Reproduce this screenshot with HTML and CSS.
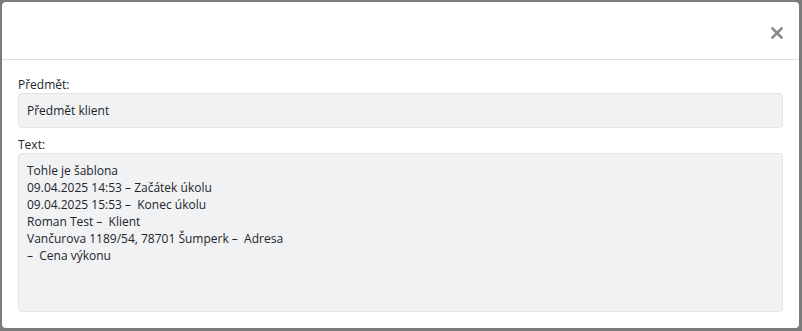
FILE: index.html
```html
<!DOCTYPE html>
<html lang="cs">
<head>
    <meta charset="UTF-8">
    <meta name="viewport" content="width=device-width, initial-scale=1.0">
    <title>Šablona</title>
    <link rel="stylesheet" href="styles.css">
</head>
<body>
    <div class="modal">
        <!-- Hlavička -->
        <div class="modal-header">
            <button type="button" class="close" aria-label="Zavřít">
                <svg width="12" height="12" viewBox="0 0 12 12">
                    <path d="M1.5 1.5 L10.5 10.5 M10.5 1.5 L1.5 10.5" stroke="currentColor" stroke-width="2.6" stroke-linecap="square"/>
                </svg>
            </button>
        </div>

        <!-- Formulář -->
        <div class="modal-body">
            <div class="form-group">
                <label for="subject">Předmět:</label>
                <input type="text" id="subject" value="Předmět klient">
            </div>
            <div class="form-group">
                <label for="text">Text:</label>
                <textarea id="text">Tohle je šablona
09.04.2025 14:53 – Začátek úkolu
09.04.2025 15:53 –  Konec úkolu
Roman Test –  Klient
Vančurova 1189/54, 78701 Šumperk –  Adresa
–  Cena výkonu</textarea>
            </div>
        </div>
    </div>
</body>
</html>
```

FILE: styles.css
```css
body {
    margin: 0;
    padding: 2px 3px 3px 2px;
    background: #7b7b7b;
    font-family: "Open Sans", Arial, sans-serif;
    font-size: 12px;
    line-height: 17px;
    color: #212529;
    height: 331px;
    box-sizing: border-box;
}
.modal {
    background: #fff;
    border-radius: 4px;
    height: 326px;
    display: flex;
    flex-direction: column;
}
.modal-header {
    height: 57px;
    border-bottom: 1px solid #dedede;
    display: flex;
    justify-content: flex-end;
    align-items: center;
    padding: 0 16px 0 0;
}
.close {
    background: none;
    border: none;
    padding: 0;
    margin-top: 5px;
    color: #8a8a8a;
    cursor: pointer;
    display: flex;
}
.modal-body {
    padding: 16px;
    flex: 1;
    display: flex;
    flex-direction: column;
}
.form-group {
    display: flex;
    flex-direction: column;
    margin-bottom: 8px;
}
.form-group:last-child {
    margin-bottom: 0;
}
label {
    display: block;
}
input,
textarea {
    font-family: inherit;
    font-size: 12px;
    line-height: 17px;
    color: #212529;
    background: #f1f2f4;
    border: 1px solid #e2e3e5;
    border-radius: 4px;
    margin: 0;
    outline: none;
}
input {
    height: 35px;
    box-sizing: border-box;
    padding: 0 8px;
}
textarea {
    height: 159px;
    box-sizing: border-box;
    padding: 8px;
    resize: none;
    overflow: hidden;
}
```
